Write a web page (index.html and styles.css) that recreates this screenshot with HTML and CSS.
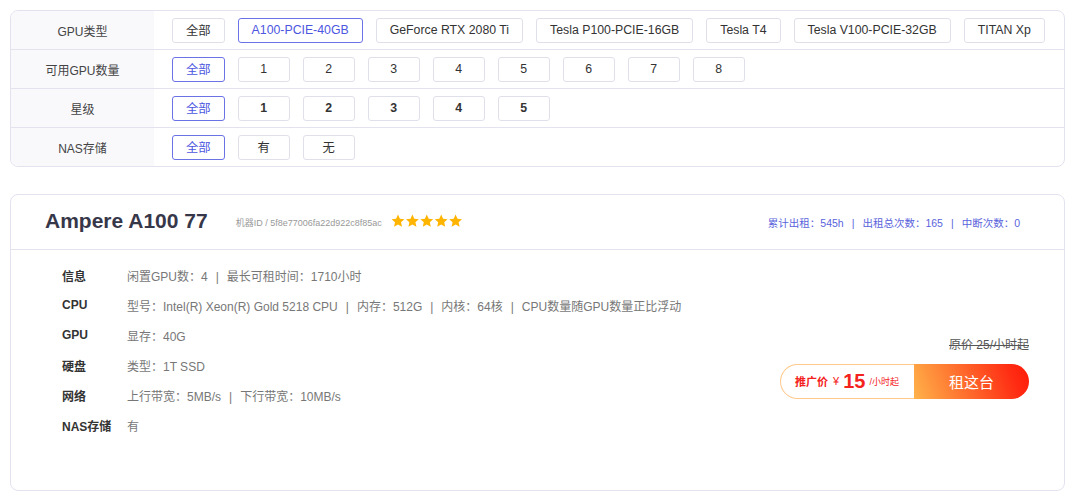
FILE: index.html
```html
<!DOCTYPE html>
<html lang="zh">
<head>
<meta charset="utf-8">
<title>GPU</title>
<link rel="stylesheet" href="styles.css">
</head>
<body>
<div class="filters">
  <div class="frow">
    <div class="flabel">GPU类型</div>
    <div class="fopts">
      <span class="btn">全部</span>
      <span class="btn active">A100-PCIE-40GB</span>
      <span class="btn">GeForce RTX 2080 Ti</span>
      <span class="btn">Tesla P100-PCIE-16GB</span>
      <span class="btn">Tesla T4</span>
      <span class="btn">Tesla V100-PCIE-32GB</span>
      <span class="btn">TITAN Xp</span>
    </div>
  </div>
  <div class="frow">
    <div class="flabel">可用GPU数量</div>
    <div class="fopts">
      <span class="btn active">全部</span>
      <span class="btn">1</span><span class="btn">2</span><span class="btn">3</span><span class="btn">4</span>
      <span class="btn">5</span><span class="btn">6</span><span class="btn">7</span><span class="btn">8</span>
    </div>
  </div>
  <div class="frow">
    <div class="flabel">星级</div>
    <div class="fopts bold">
      <span class="btn active">全部</span>
      <span class="btn">1</span><span class="btn">2</span><span class="btn">3</span><span class="btn">4</span><span class="btn">5</span>
    </div>
  </div>
  <div class="frow">
    <div class="flabel">NAS存储</div>
    <div class="fopts">
      <span class="btn active">全部</span>
      <span class="btn">有</span><span class="btn">无</span>
    </div>
  </div>
</div>

<div class="card">
  <div class="chead">
    <div class="title">Ampere A100 77</div>
    <div class="mid">机器ID / 5f8e77006fa22d922c8f85ac</div>
    <div class="stars">
      <svg viewBox="0 0 72 14" width="72" height="14">
        <defs><polygon id="s" points="7,0.6 8.9,4.8 13.4,5.2 10,8.2 11,12.8 7,10.4 3,12.8 4,8.2 0.6,5.2 5.1,4.8"/></defs>
        <use href="#s" x="0" fill="#ffb400"/>
        <use href="#s" x="14.4" fill="#ffb400"/>
        <use href="#s" x="28.8" fill="#ffb400"/>
        <use href="#s" x="43.2" fill="#ffb400"/>
        <use href="#s" x="57.6" fill="#ffb400"/>
      </svg>
    </div>
    <div class="stats">累计出租：545h<span class="sep">|</span>出租总次数：165<span class="sep">|</span>中断次数：0</div>
  </div>
  <div class="cbody">
    <div class="details">
      <div class="drow"><span class="dl">信息</span><span class="dv">闲置GPU数：4<span class="vs">|</span>最长可租时间：1710小时</span></div>
      <div class="drow"><span class="dl">CPU</span><span class="dv">型号：Intel(R) Xeon(R) Gold 5218 CPU<span class="vs">|</span>内存：512G<span class="vs">|</span>内核：64核<span class="vs">|</span>CPU数量随GPU数量正比浮动</span></div>
      <div class="drow"><span class="dl">GPU</span><span class="dv">显存：40G</span></div>
      <div class="drow"><span class="dl">硬盘</span><span class="dv">类型：1T SSD</span></div>
      <div class="drow"><span class="dl">网络</span><span class="dv">上行带宽：5MB/s<span class="vs">|</span>下行带宽：10MB/s</span></div>
      <div class="drow"><span class="dl">NAS存储</span><span class="dv">有</span></div>
    </div>
    <div class="price">
      <div class="orig">原价 25/小时起</div>
      <div class="pbtn">
        <div class="promo"><span class="pl">推广价</span><span class="yen">¥</span><span class="num">15</span><span class="unit">/小时起</span></div>
        <div class="rent">租这台</div>
      </div>
    </div>
  </div>
</div>
</body>
</html>
```

FILE: styles.css
```css
* { box-sizing: border-box; }
body {
  margin: 0;
  background: #fff;
  font-family: "Liberation Sans", "Noto Sans CJK SC", sans-serif;
  color: #333;
  font-size: 12px;
}
.filters {
  margin: 10px 0 0 10px;
  width: 1055px;
  border: 1px solid #e3e3f0;
  border-radius: 8px;
  overflow: hidden;
}
.frow {
  display: flex;
  height: 39px;
  border-top: 1px solid #e3e3f0;
}
.frow:first-child { border-top: none; height: 38px; }
.flabel {
  width: 143px;
  background: #f9f9fc;
  display: flex;
  align-items: center;
  justify-content: center;
  color: #444;
  font-size: 12px;
}
.fopts {
  display: flex;
  align-items: center;
  gap: 13px;
  padding-left: 18px;
}
.btn {
  min-width: 52px;
  height: 25px;
  padding: 0 13px;
  border: 1px solid #e0e0ea;
  border-radius: 3px;
  display: inline-flex;
  align-items: center;
  justify-content: center;
  color: #333;
  font-size: 12.3px;
  background: #fff;
}
.btn.active {
  border-color: #6a72e6;
  color: #4c56e0;
}
.bold .btn { font-weight: 700; }
.bold .btn.active { font-weight: 400; }

.card {
  margin: 27px 0 0 10px;
  width: 1055px;
  height: 297px;
  border: 1px solid #e3e3f0;
  border-radius: 8px;
  display: flex;
  flex-direction: column;
}
.chead {
  height: 55px;
  border-bottom: 1px solid #e3e3f0;
  display: flex;
  align-items: center;
  padding: 0 44px 0 34px;
}
.title {
  font-size: 21px;
  font-weight: 700;
  color: #37374a;
  margin-top: -2px;
}
.mid {
  margin-left: 28px;
  font-size: 9px;
  color: #999;
}
.stars { margin-left: 9px; display: flex; margin-top: -2px; }
.stats {
  margin-left: auto;
  font-size: 10.5px;
  color: #5a63dc;
}
.sep { margin: 0 8px; }
.cbody {
  flex: 1;
  display: flex;
  padding: 10px 35px 0 51px;
}
.drow {
  display: flex;
  height: 30px;
  align-items: center;
}
.dl {
  width: 65px;
  font-weight: 700;
  color: #333;
  font-size: 12px;
}
.dv {
  color: #777;
  font-size: 12px;
}
.vs { margin: 0 8px; }
.price {
  margin-left: auto;
  align-self: center;
  margin-top: -17px;
  display: flex;
  flex-direction: column;
  align-items: flex-end;
}
.orig {
  font-size: 12px;
  color: #555;
  text-decoration: line-through;
  margin-bottom: 12px;
}
.pbtn {
  display: flex;
  width: 249px;
  height: 35px;
}
.promo {
  width: 134px;
  border: 1px solid #ffc98c;
  border-right: none;
  border-radius: 18px 0 0 18px;
  display: flex;
  align-items: center;
  padding-left: 14px;
  color: #f4221c;
}
.pl { font-size: 11px; font-weight: 700; }
.yen { font-size: 11px; margin-left: 5px; }
.num { font-size: 20px; font-weight: 700; margin-left: 4px; }
.unit { font-size: 9px; margin-left: 4px; }
.rent {
  flex: 1;
  border-radius: 0 18px 18px 0;
  background: linear-gradient(70deg, #ffb24a 0%, #ff7a32 35%, #ff2a12 85%, #ff1a08 100%);
  color: #fff;
  font-size: 15px;
  display: flex;
  align-items: center;
  justify-content: center;
}
```
